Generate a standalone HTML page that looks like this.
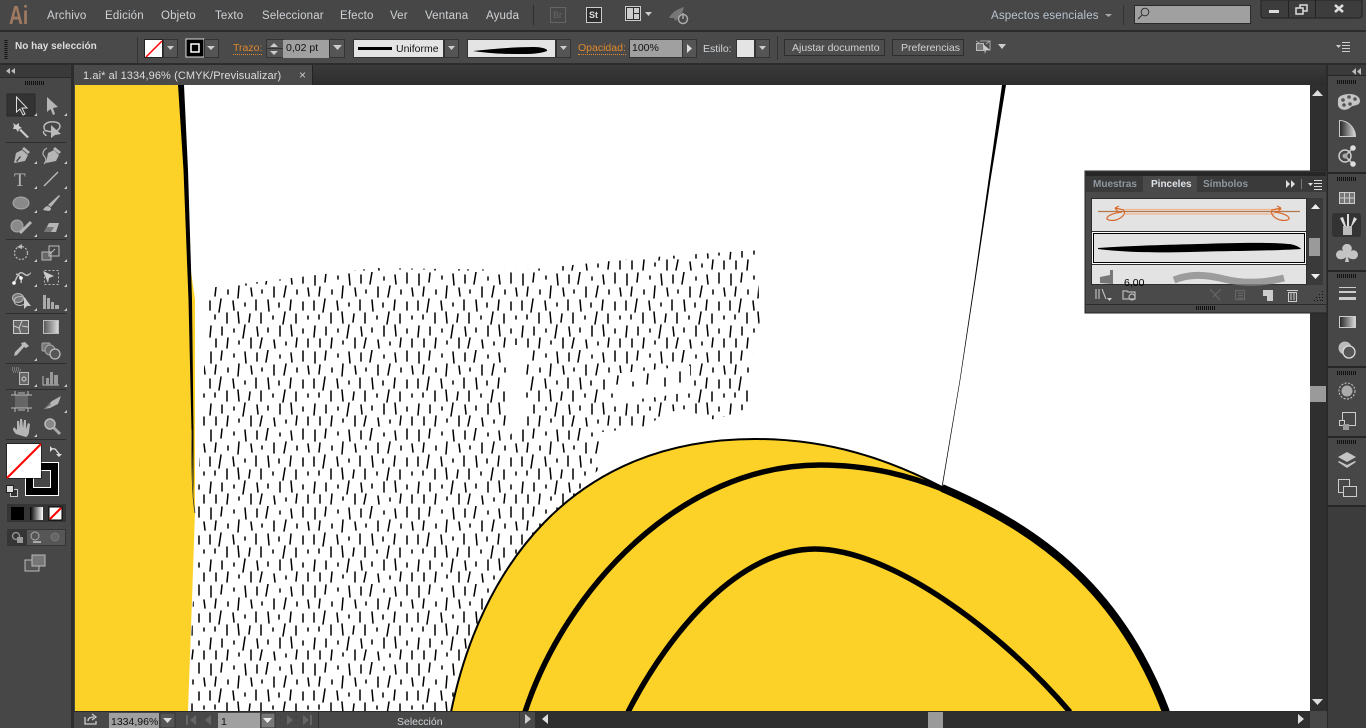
<!DOCTYPE html>
<html><head><meta charset="utf-8"><style>
html,body{margin:0;padding:0;width:1366px;height:728px;overflow:hidden;background:#474747}
body{position:relative;font-family:"Liberation Sans",sans-serif}
svg{position:absolute;left:0;top:0}
.t{position:absolute;white-space:nowrap;font-size:11px;line-height:14px;color:#cfd3d6}
.m{top:9px;font-size:11.5px;letter-spacing:.15px}
.c{top:41px;font-size:10.5px}
.o{color:#e08a2c;border-bottom:1px dotted #e08a2c;line-height:12px;top:42px}
.k{color:#111}
.b{font-weight:bold}
</style></head><body>
<svg width="1366" height="728" viewBox="0 0 1366 728">
<defs>
<pattern id="d" width="104" height="78" patternUnits="userSpaceOnUse" x="208" y="272">
<path stroke="#000" stroke-width="1.500" stroke-linecap="round" fill="none" d="M3 2v11M14 1l-1 9M26 4v3M37 2l1 11M49 3v8M60 0l-2 12M72 5v3M83 3l1 9M95 1v10M8 15l-1 9M20 18v4M31 14l-1 12M43 16l1 8M54 18v3M66 15v10M78 14l-2 11M89 18v4M100 16l1 8M2 29v9M13 27l-2 13M25 29l1 9M37 31v3M48 28v10M60 28l1 11M71 31v4M83 28l-1 10M95 30v8M7 43v4M19 41v10M30 40l1 11M42 42l-1 8M53 41v10M65 44v3M77 40l-2 12M88 42v9M100 44v3M3 54l-1 11M14 55v8M26 57v3M37 53l-2 13M49 55l1 9M60 56v4M72 54v10M83 53l1 11M95 57v4M8 67v8M20 66l-1 10M31 69v3M43 66v10M54 66l-2 10M66 68l1 8M78 70v3M89 66l-1 9M100 67v8"/>
</pattern>
<linearGradient id="tab" x1="0" y1="0" x2="0" y2="1"><stop offset="0" stop-color="#3a3a3a"/><stop offset="1" stop-color="#2d2d2d"/></linearGradient>
<linearGradient id="gr" x1="0" y1="0" x2="1" y2="0"><stop offset="0" stop-color="#222"/><stop offset="1" stop-color="#ddd"/></linearGradient>
<linearGradient id="gr2" x1="0" y1="0" x2="1" y2="0"><stop offset="0" stop-color="#000"/><stop offset="1" stop-color="#fff"/></linearGradient>
<linearGradient id="gr3" x1="0" y1="0" x2="1" y2="0"><stop offset="0" stop-color="#555"/><stop offset="1" stop-color="#ddd"/></linearGradient>
</defs>

<!-- chrome base -->
<rect width="1366" height="728" fill="#474747"/>
<rect y="30" width="1366" height="2" fill="#2c2c2c"/>
<rect y="32" width="1366" height="31" fill="#4a4a4a"/>
<rect y="63" width="1366" height="2" fill="#2c2c2c"/>

<!-- document area -->
<rect x="73" y="65" width="1254" height="20" fill="url(#tab)"/>
<rect x="74" y="65" width="238" height="20" fill="#4a4a4a"/>
<rect x="312" y="65" width="1" height="20" fill="#222"/>
<rect x="75" y="85" width="1235" height="626" fill="#fff"/>

<!-- artwork -->
<path fill="#fdd228" d="M75 85H178L183 150L188 250L195 300L195 512L192 600L188 711H75Z"/>
<path fill="#000" d="M178 85H184L188 170L192 300L193.500 430L193.500 500L191.500 430L188.500 300L183.500 170Z"/>
<path fill="none" stroke="#333" stroke-width=".8" d="M192 430Q191 490 195 513"/>
<clipPath id="reg"><path d="M208 288L375 268L525 270L640 258L757 250L760 320L750 370L748 408L715 420L680 408L640 428L602 432L598 470L570 500L520 560L470 680L450 711H188L197 510Z"/></clipPath>
<g clip-path="url(#reg)"><rect x="180" y="245" width="590" height="470" fill="url(#d)"/>
<path fill="#fff" d="M592 376L690 366V392L650 398L604 402ZM510 345H525V420L510 435Z"/>
<path stroke="#000" stroke-width="1.500" stroke-linecap="round" fill="none" d="M604 380v9M618 376l-1 8M633 382v4M648 374l-1 10M665 378v8M680 372v10M612 394v3"/>
</g>
<path fill="#fdd228" stroke="#000" stroke-width="2" d="M451 712C480 570 570 439 755 439C830 439 890 460 942 487C1040 530 1120 590 1168 712Z"/>
<path fill="#000" d="M1002 85H1006L990.500 180L975.500 280L960.300 380L942.300 488H941.500L959.700 380L974.500 280L988.500 180Z"/>
<path fill="none" stroke="#000" stroke-width="8" d="M942 488C1040 530 1120 590 1166 712"/>
<path fill="none" stroke="#000" stroke-width="5.500" d="M525 712C565 590 680 465 820 465C870 465 910 476 945 490"/>
<path fill="none" stroke="#000" stroke-width="5.500" d="M628 712C670 630 740 549 815 549C890 549 1000 630 1070 712"/>

<!-- scrollbars -->
<rect x="1310" y="85" width="17" height="626" fill="#2f2f2f"/>
<rect x="1326" y="65" width="2" height="663" fill="#2a2a2a"/>
<path fill="#ddd" d="M1312 96l5.500-6 5.500 6zM1312 699l5.500 6 5.500-6z"/>
<rect x="1310" y="386" width="16" height="16" fill="#9a9a9a"/>
<rect x="73" y="711" width="1254" height="17" fill="#484848"/>
<rect x="73" y="711" width="1254" height="1" fill="#2b2b2b"/>
<rect x="535" y="712" width="775" height="16" fill="#2f2f2f"/>
<rect x="928" y="712" width="15" height="16" fill="#9a9a9a"/>
<path fill="#ddd" d="M548 714v10l-6-5zM1298 714v10l6-5z"/>
<rect x="1310" y="711" width="17" height="17" fill="#474747"/>
<!-- status bar -->
<rect x="109" y="713" width="50" height="15" fill="#a0a0a0"/>
<rect x="160" y="713" width="15" height="15" fill="#555" stroke="#333"/>
<path fill="#ddd" d="M163 718h9l-4.500 5z"/>
<path fill="none" stroke="#ccc" stroke-width="1.300" d="M85 717v7h11v-3M88 721c0-3 3-4 6-4M92 714l4 3-4 3"/>
<path fill="#666" d="M186 715h2v10h-2zM196 715v10l-6-5zM211 715v10l-6-5zM287 715v10l6-5zM303 715v10l6-5zM310 715h2v10h-2z"/>
<rect x="218" y="713" width="42" height="15" fill="#a0a0a0"/>
<rect x="261" y="713" width="14" height="15" fill="#777" stroke="#333"/>
<path fill="#eee" d="M263 718h9l-4.500 5z"/>
<rect x="318" y="712" width="1" height="16" fill="#333"/>
<rect x="519" y="712" width="1" height="16" fill="#333"/>
<path fill="#ccc" d="M525 714v10l6-5z"/>

<!-- left toolbar -->
<rect x="0" y="65" width="72" height="13" fill="#3a3a3a"/>
<rect x="0" y="77" width="72" height="1" fill="#2a2a2a"/>
<rect x="71" y="65" width="3" height="663" fill="#2c2c2c"/>
<rect x="1" y="78" width="70" height="650" fill="#474747"/>
<path fill="#bbb" d="M10 68v6l-4-3zM15 68v6l-4-3z"/>
<path stroke="#111" stroke-dasharray="1 1" stroke-width="4" d="M25 83H45"/>
<rect x="7" y="94" width="28" height="22" fill="#333" stroke="#2a2a2a"/>
<g stroke="#2e2e2e"><path d="M6 142.500H66M6 239.500H66M6 313.500H66M6 363.500H66M6 389.500H66M6 439.500H66"/></g>
<g fill="#ccc" stroke="none">
<path fill="none" stroke="#ddd" d="M16.500 97V112L20 109L23 115L25 114L22 108L27 108Z"/>
<path fill="#b5b5b5" d="M47 97V112L50.500 109L53 115L55 114L53 108L58 107Z"/>
<path d="M13 123l3 2 3-2 0 3 3 2-3 1-1 3-2-3-3 0 1-3zM19 130l2-1 8 8-2 1z"/>
<path fill="none" stroke="#bbb" stroke-width="1.500" d="M44 127c0-4 6-6 11-5 6 1 6 5 3 8-3 2-8 2-11 1-2 0-3-2-3-4zM44 131c-2 3 2 3 2 5"/>
<path fill="#bbb" d="M51 125v13l4-3 6-1z"/>
<path fill="#b5b5b5" d="M14 163l2-10 6-3 6 5-3 6zM24 147l6 5-2 2-6-5z"/>
<path fill="#474747" d="M16 161l4-5 1 1-4 5z"/>
<path fill="#b5b5b5" d="M46 163l2-10 6-3 5 5-3 6zM55 147l6 5-2 2-6-5z"/>
<path fill="none" stroke="#b5b5b5" stroke-width="1.200" d="M47 148c-4 2-5 6-3 8s3 5 0 8"/>
<text x="14" y="186" font-family="Liberation Serif,serif" font-size="19" fill="#b5b5b5">T</text>
<path stroke="#bbb" stroke-width="1.300" fill="none" d="M44 186L58 172"/>
<ellipse cx="21" cy="203" rx="8" ry="6" fill="#8a8a8a" stroke="#aaa"/>
<path fill="#b5b5b5" d="M59 195l1 1-9 11-3-2zM43 210c1-2 3-4 5-4l3 2c0 2-1 3-3 3z"/>
<circle cx="17" cy="226" r="6" fill="#8a8a8a" stroke="#aaa"/>
<path stroke="#b5b5b5" stroke-width="3" d="M20 233L31 222"/>
<path fill="#b5b5b5" d="M44 232l5-9h10l-3 9z"/><path fill="#777" d="M44 232l3-5h7l-3 5z"/>
<circle cx="21" cy="253" r="6.500" fill="none" stroke="#bbb" stroke-width="1.200" stroke-dasharray="2 1.500"/>
<path fill="#bbb" d="M17 247l5-3v5z"/>
<rect x="42" y="252" width="9" height="8" fill="#666" stroke="#bbb"/>
<rect x="49" y="246" width="10" height="10" fill="none" stroke="#bbb"/>
<path stroke="#bbb" fill="none" d="M50 254l5-5"/>
<path fill="none" stroke="#bbb" stroke-width="1.500" d="M14 283c3-5 3-8 6-10s5 4 8 2 2-2 2-2M16 274c4 1 6 5 5 9"/>
<circle cx="14" cy="283" r="1.800" fill="#fff"/><circle cx="21" cy="278" r="1.800" fill="#fff"/>
<rect x="44.500" y="270.500" width="14" height="14" fill="none" stroke="#bbb" stroke-dasharray="2 2"/>
<path fill="#ccc" d="M43 271l11 5-5 2-1 5z"/>
<ellipse cx="18" cy="298" rx="5.500" ry="4.500" fill="#777" stroke="#bbb"/>
<ellipse cx="20" cy="301" rx="6" ry="4.500" fill="none" stroke="#bbb"/>
<path fill="#ccc" d="M24 297v12l3-3 4 0z"/>
<path fill="#aaa" d="M43 295h3v14h-3zM47 298h3v11h-3zM51 302h3v7h-3zM55 305h4v4h-4z"/>
<rect x="13.500" y="320.500" width="15" height="13" fill="#666" stroke="#ccc"/>
<path fill="none" stroke="#ccc" d="M14 326l5 2 3-7M19 328l2 6M22 326l6 1"/>
<rect x="43.500" y="320.500" width="15" height="13" fill="url(#gr3)" stroke="#bbb"/>
<path fill="#bbb" d="M25 342l4 4-3 2-2-1-7 8-3 1 1-4 7-7-1-2z"/>
<rect x="42" y="343" width="8" height="8" rx="1" fill="#777" stroke="#aaa"/>
<circle cx="50" cy="350" r="5" fill="#666" stroke="#aaa"/><circle cx="55" cy="354" r="5" fill="#555" stroke="#bbb" stroke-width="1.300"/>
<rect x="19.500" y="372.500" width="9" height="12" fill="#666" stroke="#bbb"/>
<circle cx="24" cy="379" r="2" fill="none" stroke="#ccc"/>
<path stroke="#aaa" stroke-dasharray="1 1" d="M12 370h10M13 372h8M12 368h8"/>
<path fill="none" stroke="#bbb" d="M43 376v9h16"/>
<path fill="#999" d="M46 378h3v7h-3zM50 372h3v13h-3zM54 375h4v10h-4z"/>
<rect x="15" y="395" width="13" height="13" fill="#666"/>
<path stroke="#bbb" fill="none" d="M15 391v4h-4M28 391v4h4M15 412v-4h-4M28 412v-4h4M15 395h13M15 408h13M18 393h7M18 410h7"/>
<path fill="#b5b5b5" d="M44 409l8-8 9-5-3 8-8 4z"/><path fill="#777" d="M43 410l7-7 1 2z"/>
<path fill="#b5b5b5" d="M16 434c-2-2-3-4-3-5l1-2 3 3 0-9 2 0 1 7 0-9 2 0 1 9 1-8 2 0 0 9 2-6 2 1-1 8c0 2-2 5-3 5z"/>
<circle cx="50" cy="424" r="5" fill="#888" stroke="#bbb" stroke-width="1.500"/><path stroke="#aaa" stroke-width="3" d="M54 428l6 6"/>
</g>
<g fill="#ccc"><path d="M34 116l3-3v3zM64 116l3-3v3zM34 164l3-3v3zM64 164l3-3v3zM34 189l3-3v3zM64 189l3-3v3zM34 213l3-3v3zM64 213l3-3v3zM34 237l3-3v3zM64 237l3-3v3zM34 262l3-3v3zM64 262l3-3v3zM34 287l3-3v3zM64 287l3-3v3zM34 311l3-3v3zM64 311l3-3v3zM34 361l3-3v3zM34 387l3-3v3zM64 387l3-3v3zM64 413l3-3v3zM34 437l3-3v3z"/></g>

<!-- fill stroke -->
<rect x="25" y="462" width="34" height="34" fill="#fff"/>
<rect x="26" y="463" width="32" height="32" fill="#000"/>
<rect x="33" y="470" width="18" height="18" fill="#fff"/>
<rect x="34" y="471" width="16" height="16" fill="#474747"/>
<rect x="6.500" y="443.500" width="35" height="35" fill="#000"/>
<rect x="7" y="444" width="34" height="34" fill="#fff"/>
<path stroke="#f00" stroke-width="2" d="M7 478L41 444"/>
<path fill="none" stroke="#ddd" stroke-width="1.300" d="M51 449c0 0 4-1 5 1s3 3 3 4"/><path fill="#ddd" d="M50 446l3 3-3 3zM56 454h6l-3 3z"/>
<rect x="10.500" y="489.500" width="7" height="7" fill="#333" stroke="#ccc"/>
<rect x="6.500" y="485.500" width="7" height="7" fill="#ddd" stroke="#222"/>
<rect x="7" y="504" width="59" height="18" fill="#353535"/>
<rect x="11" y="507" width="13" height="13" fill="#000"/>
<rect x="30" y="507" width="13" height="13" fill="url(#gr2)"/>
<rect x="49" y="507" width="13" height="13" fill="#fff" stroke="#000"/>
<path stroke="#f00" stroke-width="2" d="M50 519L61 508"/>
<rect x="7" y="529" width="59" height="17" fill="#353535"/>
<rect x="27" y="530" width="38" height="15" fill="#565656"/>
<circle cx="16" cy="536" r="3.500" fill="none" stroke="#999" stroke-width="1.300"/><rect x="17" y="537" width="6" height="6" fill="#999"/>
<circle cx="35" cy="536" r="4" fill="none" stroke="#aaa"/><rect x="33" y="541" width="8" height="2" fill="#aaa"/>
<circle cx="55" cy="537" r="4" fill="#666" stroke="#777"/>
<rect x="25" y="560" width="14" height="11" fill="#555" stroke="#bbb"/>
<rect x="32" y="555" width="13" height="11" fill="#777" stroke="#bbb"/>

<!-- right dock -->
<rect x="1328" y="65" width="38" height="11" fill="#3b3b3b"/>
<path fill="#bbb" d="M1356 68v7l-4-3.500zM1361 68v7l-4-3.500z"/>
<rect x="1328" y="505" width="38" height="223" fill="#3c3c3c"/>
<g fill="#262626"><rect x="1328" y="75" width="38" height="1"/><rect x="1328" y="172" width="38" height="2"/><rect x="1328" y="270" width="38" height="2"/><rect x="1328" y="366" width="38" height="2"/><rect x="1328" y="436" width="38" height="2"/><rect x="1328" y="505" width="38" height="2"/></g>
<path stroke="#111" stroke-width="4" stroke-dasharray="1 1" d="M1337 82H1357M1337 179H1357M1337 276H1357M1337 373H1357M1337 442H1357"/>
<path fill="#c4c4c4" d="M1338 100c0-5 8-6 12-6s10 2 10 7-7 4-9 6-6 4-10 2-3-6-3-9z"/>
<g fill="#555"><circle cx="1343" cy="100" r="1.800"/><circle cx="1349" cy="97" r="1.800"/><circle cx="1355" cy="99" r="1.800"/><circle cx="1344" cy="105" r="1.800"/><circle cx="1350" cy="104" r="1.800"/></g>
<path d="M1339.500 120.500c9 0 16 8 16 16h-16z" fill="url(#gr)" stroke="#ccc"/>
<g fill="none" stroke="#ccc" stroke-width="1.500"><circle cx="1345" cy="156" r="6"/><path d="M1345 156l8-8M1345 156l8 8"/></g>
<circle cx="1345" cy="156" r="2.500" fill="#aaa"/><circle cx="1353" cy="148" r="2.800" fill="#ddd"/><circle cx="1353" cy="164" r="2.800" fill="#ddd"/>
<rect x="1339.500" y="192.500" width="15" height="11" fill="#777" stroke="#ccc"/><path stroke="#ccc" fill="none" d="M1344.500 193v10M1349.500 193v10M1340 198h14"/>
<rect x="1332" y="213" width="29" height="24" rx="3" fill="#333"/>
<rect x="1343" y="226" width="9" height="9" fill="#bbb"/>
<path fill="#ddd" d="M1340 218l3-1 3 9h-2zM1347 214l2 0 0 12h-2zM1354 217l3 2-5 7h-1z"/>
<path fill="#c4c4c4" d="M1347 244a4.500 4.500 0 0 1 4 7 4.500 4.500 0 1 1 1 8c-2 0-3-1-4-2l1 5h-4l1-5c-1 1-2 2-4 2a4.500 4.500 0 1 1 1-8 4.500 4.500 0 0 1 4-7z"/>
<path fill="#ccc" d="M1339 287h17v1h-17zM1339 291h17v2h-17zM1339 297h17v3h-17z"/>
<rect x="1339.500" y="316.500" width="16" height="11" fill="url(#gr)" stroke="#ccc"/>
<circle cx="1345" cy="348" r="6.500" fill="#bbb"/><circle cx="1349" cy="352" r="6" fill="#555" stroke="#ddd" stroke-width="1.300"/>
<circle cx="1347" cy="391" r="8" fill="none" stroke="#ccc" stroke-dasharray="2 1.500"/><circle cx="1347" cy="391" r="5.500" fill="#aaa"/>
<rect x="1342.500" y="412.500" width="13" height="13" fill="none" stroke="#ccc"/><rect x="1339.500" y="420.500" width="5" height="5" fill="#444" stroke="#ccc"/><rect x="1343" y="424" width="6" height="6" fill="#999"/>
<path fill="#c4c4c4" d="M1347 452l9 5-9 5-9-5zM1339 461l8 4 8-4 1 1-9 6-9-6z"/>
<rect x="1338.500" y="479.500" width="11" height="13" fill="#474747" stroke="#ccc"/><rect x="1343.500" y="486.500" width="13" height="10" fill="#474747" stroke="#ccc"/>

<!-- floating panel -->
<rect x="1085" y="171" width="242" height="142" fill="#4a4a4a" stroke="#232323"/>
<rect x="1086" y="172" width="240" height="20" fill="#3a3a3a"/>
<rect x="1086" y="172" width="240" height="4" fill="#262626"/>
<rect x="1143" y="176" width="54" height="17" fill="#4a4a4a"/>
<path fill="#ddd" d="M1286 180v8l4-4zM1291 180v8l4-4z"/>
<path stroke="#777" d="M1301.500 179v10"/>
<path fill="#ddd" d="M1308 183h5l-2.500 3zM1314 180h8v1h-8zM1314 183h8v1h-8zM1314 186h8v1h-8zM1314 189h8v1h-8z"/>
<rect x="1091" y="198" width="216" height="87" fill="#2d2d2d"/>
<rect x="1092" y="199" width="214" height="32" fill="#e3e3e3"/>
<rect x="1092" y="232" width="214" height="32" fill="#fff"/>
<rect x="1093.500" y="233.500" width="211" height="29" fill="#e3e3e3" stroke="#000"/>
<rect x="1092" y="265" width="214" height="19" fill="#e3e3e3"/>
<g fill="none" stroke="#d9692b" stroke-width="1.200">
<path d="M1098 211.500H1300" stroke="#b4764a"/>
<path d="M1125 209.500H1282M1125 214H1275" stroke="#f0b48e"/>
<path d="M1115 208l9 2c2 4-2 8-8 10-5 1-10 0-9-2 1-3 8-5 15-6M1115 208l4-2M1115 208l3 4"/>
<path d="M1281 208l-9 2c-2 4 2 8 8 10 5 1 10 0 9-2-1-3-8-5-15-6M1281 208l-4-2M1281 208l-3 4"/>
</g>
<path fill="#000" d="M1098 248c30-2 60-3 100-4 30-1 70-2 90 0 5 0 12 3 13 5-30 2-80 2-110 3-40 1-70 0-93-3z"/>
<path fill="#777" d="M1100 283l0-6 10-2 0-5 3 0 0 14z"/>
<path fill="none" stroke="#8a8a8a" stroke-width="7" opacity=".8" d="M1174 280c15-6 30-6 50-1s40 4 60-1"/>
<rect x="1307" y="198" width="16" height="87" fill="#3a3a3a"/>
<path fill="#eee" d="M1311 209l4.500-5 4.500 5zM1311 274l4.500 5 4.500-5z"/>
<rect x="1309" y="238" width="11" height="18" fill="#9a9a9a"/>
<g fill="none" stroke="#bbb" stroke-width="1.200"><path d="M1096 289v10M1099 289v10M1102 289l4 10"/><path d="M1123 291h4l1 1h7v7h-12z"/><circle cx="1132" cy="297" r="3"/></g>
<path fill="#ccc" d="M1107 298h5l-2.500 3z"/>
<g fill="none" stroke="#666" stroke-width="1.200"><path d="M1210 289l10 11M1221 289l-8 8"/><rect x="1235.500" y="290.500" width="9" height="9"/><path d="M1238 293h5M1238 295.500h5M1238 298h5"/></g>
<path fill="#ccc" d="M1263 290h10v11h-6v-5h-4z"/>
<g fill="none" stroke="#ccc"><rect x="1288.500" y="292.500" width="8" height="9"/><path d="M1287 290.500h11M1291 293v7M1294 293v7"/></g>
<path fill="#111" d="M1322 291h1v1h-1zM1319 294h1v1h-1zM1322 294h1v1h-1zM1316 297h1v1h-1zM1319 297h1v1h-1zM1322 297h1v1h-1zM1314 300h1v1h-1zM1317 300h1v1h-1zM1320 300h1v1h-1zM1322 300h1v1h-1z"/>
<rect x="1086" y="304" width="240" height="1" fill="#2a2a2a"/>
<path stroke="#111" stroke-width="4" stroke-dasharray="1 1" d="M1196 308H1216"/>

<!-- menu bar bits -->
<path stroke="#2e2e2e" d="M533.500 5v20"/>
<rect x="550.500" y="7.500" width="15" height="15" fill="none" stroke="#666"/>
<rect x="586.500" y="7.500" width="15" height="15" fill="#2d2d2d" stroke="#ccc"/>
<rect x="625.500" y="6.500" width="15" height="14" fill="#2d2d2d" stroke="#ccc"/>
<path fill="#ccc" d="M627 8h6v11h-6zM634 8h5v5h-5zM634 14h5v5h-5z"/>
<path fill="#ccc" d="M645 12h7l-3.500 4z"/>
<path fill="#777" d="M669 18c3-6 9-9 15-11-1 5-4 11-9 14l-1-3z"/>
<circle cx="683" cy="19" r="4.500" fill="none" stroke="#aaa" stroke-width="1.500"/><path stroke="#aaa" stroke-width="1.500" d="M683 13v6"/>
<rect x="1123" y="5" width="1" height="20" fill="#333"/>
<path fill="#aaa" d="M1105 14h7l-3.500 3z"/>
<rect x="1134.500" y="5.500" width="116" height="18" fill="#a0a0a0" stroke="#2a2a2a"/>
<circle cx="1145" cy="12" r="3.800" fill="none" stroke="#333"/><path stroke="#333" stroke-width="1.200" d="M1142 15l-4 4"/>
<path fill="#3d3d3d" stroke="#222" d="M1261 0v15q0 3 3 3h95q3 0 3-3V0z"/>
<path stroke="#222" d="M1288.500 0v18M1315.500 0v18"/>
<rect x="1269" y="10" width="10" height="3" fill="#ddd"/>
<rect x="1300" y="5" width="7" height="6" fill="none" stroke="#ddd" stroke-width="1.500"/><rect x="1296" y="8" width="7" height="6" fill="#3d3d3d" stroke="#ddd" stroke-width="1.500"/>
<path stroke="#ddd" stroke-width="2.500" d="M1335 5l8 7M1343 5l-8 7"/>

<!-- control bar -->
<path stroke="#111" stroke-dasharray="1 1" stroke-width="3" d="M6 40V60"/>
<rect x="137" y="37" width="1" height="26" fill="#333"/>
<rect x="144.500" y="39.500" width="18" height="18" fill="#fff" stroke="#222"/>
<path stroke="#f00" stroke-width="1.500" d="M146 57L162 41"/>
<rect x="163.500" y="39.500" width="14" height="18" fill="#555" stroke="#333"/>
<rect x="186" y="39" width="18" height="18" fill="#000" stroke="#ddd"/>
<rect x="191" y="44" width="8" height="8" fill="none" stroke="#fff" stroke-width="1.500"/>
<rect x="204.500" y="39.500" width="14" height="18" fill="#555" stroke="#333"/>
<rect x="266.500" y="39.500" width="17" height="18" fill="#555" stroke="#333"/>
<path fill="#ccc" d="M270 47l4-4 4 4zM270 51l4 4 4-4z"/>
<path stroke="#333" d="M267 48.500h16"/>
<rect x="283" y="40" width="46" height="18" fill="#a0a0a0"/>
<rect x="329.500" y="39.500" width="15" height="18" fill="#555" stroke="#333"/>
<rect x="353.500" y="39.500" width="90" height="18" fill="#e4e4e4" stroke="#333"/>
<rect x="358" y="47" width="34" height="3" fill="#000"/>
<rect x="444.500" y="39.500" width="14" height="18" fill="#555" stroke="#333"/>
<rect x="467.500" y="39.500" width="88" height="18" fill="#e4e4e4" stroke="#333"/>
<path fill="#000" d="M473 51c20-2 40-4 60-4 5 0 15 1 14 4-6 2-12 3-24 3-15 0-30 0-50-3z"/>
<rect x="556.500" y="39.500" width="14" height="18" fill="#555" stroke="#333"/>
<rect x="629.500" y="39.500" width="53" height="18" fill="#a0a0a0" stroke="#333"/>
<rect x="682.500" y="39.500" width="14" height="18" fill="#555" stroke="#333"/>
<path fill="#ddd" d="M687 44v9l5-4.500z"/>
<rect x="736.500" y="39.500" width="18" height="18" fill="#e4e4e4" stroke="#333"/>
<rect x="755.500" y="39.500" width="14" height="18" fill="#555" stroke="#333"/>
<rect x="777" y="36" width="1" height="24" fill="#333"/>
<rect x="784.500" y="39.500" width="100" height="16" fill="#4d4d4d" stroke="#2e2e2e"/>
<rect x="892.500" y="39.500" width="71" height="16" fill="#4d4d4d" stroke="#2e2e2e"/>
<rect x="976.500" y="43.500" width="7" height="7" fill="#777" stroke="#bbb"/>
<path fill="none" stroke="#aaa" d="M980 41h10v9h-4M976 41l5 3M990 41l-4 3"/>
<path fill="#ccc" d="M983 44l7 6-4 0-1 4z"/>
<g fill="#ccc">
<path d="M167 46h7l-3.500 4z"/><path d="M207 46h8l-4 4z"/><path d="M333 45h9l-4.500 5z"/><path d="M448 46h7l-3.500 4z"/><path d="M560 46h7l-3.500 4z"/><path d="M759 46h7l-3.500 4z"/><path d="M998 44h8l-4 5z"/>
<path d="M1336 45h5l-2.500 3zM1342 42h8v1h-8zM1342 45h8v1h-8zM1342 48h8v1h-8zM1342 51h8v1h-8z"/>
</g>
</svg>

<span class="t b" style="left:9px;top:0;font-size:26px;line-height:30px;color:#a07a60;font-weight:bold;transform:scaleX(.74);transform-origin:0 0">Ai</span>
<span class="t m" style="left:47px">Archivo</span>
<span class="t m" style="left:105px">Edición</span>
<span class="t m" style="left:161px">Objeto</span>
<span class="t m" style="left:215px">Texto</span>
<span class="t m" style="left:262px">Seleccionar</span>
<span class="t m" style="left:340px">Efecto</span>
<span class="t m" style="left:390px">Ver</span>
<span class="t m" style="left:425px">Ventana</span>
<span class="t m" style="left:486px">Ayuda</span>
<span class="t" style="left:553px;top:9px;font-size:9px;line-height:12px;color:#666">Br</span>
<span class="t b" style="left:589px;top:9px;font-size:9px;line-height:12px;color:#ddd">St</span>
<span class="t m" style="left:991px;color:#b9c4cf">Aspectos esenciales</span>

<span class="t b" style="left:15px;top:40px;font-size:10px;color:#ddd">No hay selección</span>
<span class="t c o" style="left:233px">Trazo:</span>
<span class="t c k" style="left:286px">0,02 pt</span>
<span class="t c k" style="left:396px;top:42px">Uniforme</span>
<span class="t c o" style="left:578px">Opacidad:</span>
<span class="t c k" style="left:632px">100%</span>
<span class="t c" style="left:703px;top:42px">Estilo:</span>
<span class="t c" style="left:792px;top:41px">Ajustar documento</span>
<span class="t c" style="left:901px;top:41px">Preferencias</span>

<span class="t" style="left:83px;top:69px;font-size:11px;color:#dcdcdc;letter-spacing:.1px">1.ai* al 1334,96% (CMYK/Previsualizar)</span>
<span class="t" style="left:299px;top:68px;font-size:12px;color:#ccc">×</span>

<span class="t b" style="left:1093px;top:178px;font-size:10px;color:#8f979e">Muestras</span>
<span class="t b" style="left:1151px;top:178px;font-size:10px;color:#e0e4e8">Pinceles</span>
<span class="t b" style="left:1203px;top:178px;font-size:10px;color:#8f979e">Símbolos</span>
<span class="t" style="left:1124px;top:276px;font-size:10.5px;color:#000">6,00</span>

<span class="t k" style="left:111px;top:715px;font-size:10.5px">1334,96%</span>
<span class="t k" style="left:221px;top:715px;font-size:10.5px">1</span>
<span class="t" style="left:397px;top:715px;font-size:10.5px">Selección</span>
</body></html>
